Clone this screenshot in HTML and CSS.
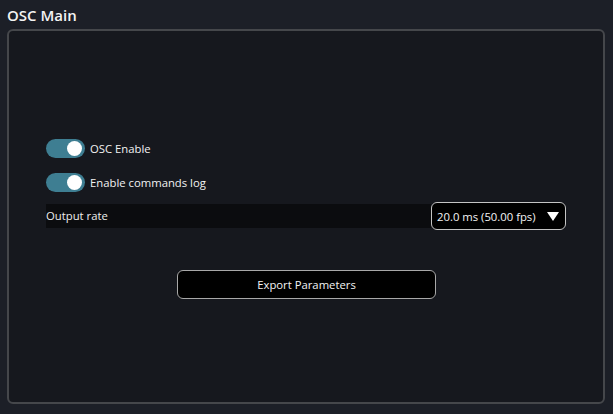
FILE: index.html
```html
<!DOCTYPE html>
<html>
<head>
<meta charset="utf-8">
<link rel="stylesheet" href="styles.css">
</head>
<body>
<div class="app">
  <div class="title">OSC Main</div>
  <div class="panel">
    <div class="row toggle-row">
      <span class="toggle on"><span class="knob"></span></span>
      <span class="label">OSC Enable</span>
    </div>
    <div class="row toggle-row">
      <span class="toggle on"><span class="knob"></span></span>
      <span class="label">Enable commands log</span>
    </div>
    <div class="row select-row">
      <div class="select-label">Output rate</div>
      <div class="select">
        <span>20.0 ms (50.00 fps)</span>
        <svg class="caret" width="12" height="9" viewBox="0 0 12 9"><polygon points="0,0 12,0 6,9" fill="#fff"/></svg>
      </div>
    </div>
    <div class="btn-wrap">
      <button class="btn">Export Parameters</button>
    </div>
  </div>
</div>
</body>
</html>
```

FILE: styles.css
```css
html, body {
  margin: 0;
  padding: 0;
  background: #1c1f27;
  width: 613px;
  height: 414px;
  overflow: hidden;
  font-family: "Open Sans", "Noto Sans", sans-serif;
  color: #f0f0f0;
}
.app {
  display: flex;
  flex-direction: column;
  height: 414px;
  box-sizing: border-box;
  padding: 4px 8px 10px 7px;
}
.title {
  font-size: 15px;
  font-weight: 600;
  line-height: 22px;
  height: 25px;
  color: #f4f4f4;
}
.panel {
  flex: 1;
  background: #16181e;
  border: 2px solid #45474b;
  border-radius: 6px;
  padding: 108px 37px 0 37px;
  display: flex;
  flex-direction: column;
}
.row {
  display: flex;
  align-items: center;
}
.toggle-row {
  height: 19px;
}
.toggle-row + .toggle-row {
  margin-top: 15px;
}
.toggle {
  width: 39px;
  height: 19px;
  border-radius: 10px;
  background: #3e7e92;
  position: relative;
  flex: none;
}
.knob {
  position: absolute;
  right: 3px;
  top: 2px;
  width: 15px;
  height: 15px;
  border-radius: 50%;
  background: #ffffff;
}
.label {
  font-size: 11.3px;
  margin-left: 5px;
  color: #f2f2f2;
}
.select-row {
  margin-top: 10px;
  height: 28px;
}
.select-label {
  flex: 1;
  height: 24px;
  background: #0b0c0f;
  font-size: 11.3px;
  line-height: 24px;
  color: #eeeeee;
}
.select {
  width: 135px;
  height: 28px;
  box-sizing: border-box;
  background: #000;
  border: 1px solid #c4c4c4;
  border-radius: 6px;
  display: flex;
  align-items: center;
  justify-content: space-between;
  padding: 0 6px 0 5px;
  font-size: 11.3px;
  color: #f4f4f4;
}
.caret {
  display: block;
}
.btn-wrap {
  display: flex;
  padding-left: 131px;
  margin-top: 40px;
}
.btn {
  width: 259px;
  height: 29px;
  background: #000;
  border: 1px solid #a8a8a8;
  border-radius: 6px;
  color: #f4f4f4;
  font-family: "Open Sans", "Noto Sans", sans-serif;
  font-size: 11.3px;
  padding: 0;
}
```
